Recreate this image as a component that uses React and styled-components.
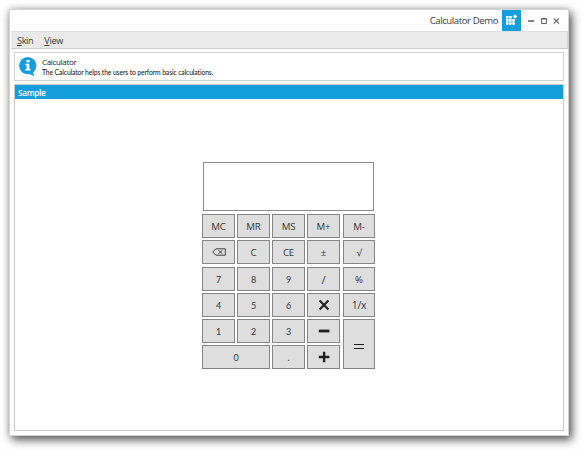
import React from "react";
import styled, { createGlobalStyle } from "styled-components";

const Global = createGlobalStyle`
  * { box-sizing: border-box; }
  body { margin: 0; background: #fff; overflow: hidden; font-family: "Open Sans", sans-serif; color: #3c3c3c; }
`;
const Page = styled.div`
  height: 450px;
  padding: 9px 14px 14px 9px;
`;
const Window = styled.main`
  width: 560px;
  height: 427px;
  display: flex;
  flex-direction: column;
  background: #fff;
  border: 1px solid #d4d4d4;
  box-shadow: 3px 4px 9px rgba(0, 0, 0, 0.62), 0 0 7px rgba(0, 0, 0, 0.22);
`;
const TitleBar = styled.header`
  height: 21px;
  display: flex;
  justify-content: flex-end;
  align-items: center;
  padding-right: 7px;
`;
const Title = styled.span`
  font-size: 9.6px;
  line-height: 21px;
  letter-spacing: -0.42px;
  margin-right: 4px;
  white-space: nowrap;
`;
const AppIcon = styled.svg`
  display: block;
  background: #149fdc;
`;
const WindowControls = styled.svg`
  display: block;
  margin-left: 7px;
`;
const MenuBar = styled.nav`
  height: 18px;
  margin: 0 0 0 1px;
  display: flex;
  gap: 11px;
  padding-left: 6px;
  background: #eaeaea;
  border-top: 1px solid #dedede;
  border-bottom: 1px solid #cbcbcb;
  border-right: 1px solid #d4d4d4;
`;
const MenuItem = styled.div`
  font-size: 9.2px;
  line-height: 17px;
  letter-spacing: -0.38px;
  &::first-letter { text-decoration: underline; }
`;
const Info = styled.section`
  height: 29px;
  margin: 3px 4px 0;
  border: 1px solid #d2d2d2;
  display: flex;
  padding-left: 4px;
`;
const InfoText = styled.div`
  display: flex;
  flex-direction: column;
  margin-left: 5px;
`;
const Heading = styled.span`
  font-size: 8px;
  line-height: 11px;
  margin-top: 3px;
  letter-spacing: -0.33px;
  color: #222;
`;
const Description = styled.span`
  font: 6.8px/10px Lato, sans-serif;
  letter-spacing: -0.12px;
  color: #111;
  white-space: nowrap;
`;
const Panel = styled.section`
  flex: 1;
  margin: 3px 4px 4px;
  border: 1px solid #cacaca;
  display: flex;
  flex-direction: column;
`;
const PanelTitle = styled.div`
  height: 14px;
  padding-left: 3px;
  color: #fff;
  background: #149fdc;
  font-size: 8.3px;
  font-weight: 600;
  letter-spacing: -0.35px;
  line-height: 15px;
`;
const Calculator = styled.div`
  width: 173px;
  margin: 63px 0 0 187px;
`;
const Display = styled.div`
  height: 49px;
  margin: 0 1px 3px;
  border: 1px solid #8c8c8c;
`;
const Keys = styled.div`
  display: grid;
  grid-template-columns: 35px 35px 35px 36px 32px;
  grid-template-rows: 26px 27px 26px 26px 26px 24px;
`;
const Key = styled.button`
  appearance: none;
  width: ${(p) => (p.$wide ? 68 : p.$last ? 32 : 33)}px;
  height: ${(p) => (p.$tall ? 50 : 24)}px;
  grid-column: span ${(p) => (p.$wide ? 2 : 1)};
  grid-row: span ${(p) => (p.$tall ? 2 : 1)};
  display: flex;
  align-items: center;
  justify-content: center;
  padding: ${(p) => (p.$tall ? 3 : p.$small ? 1 : 0)}px 0 0;
  border: 1px solid #858585;
  border-radius: 0;
  background: #dedede;
  color: #383838;
  font: ${(p) => (p.$small ? "9px Lato" : (p.$size || 9.7) + 'px "Open Sans"')}, sans-serif;
  letter-spacing: -0.2px;
`;

const Glyph = ({ d, w = 2, size = 12 }) => (
  <svg width={size} height={size} viewBox="0 0 12 12">
    <path d={d} fill="none" stroke="#202020" strokeWidth={w} />
  </svg>
);
const Erase = (
  <svg width="14" height="8" viewBox="0 0 14 8" fill="none" stroke="#333" strokeWidth="0.9">
    <path d="M.7 4 4 .8h9.3v6.4H4ZM6.4 2.2l4 3.6M10.4 2.2l-4 3.6" />
  </svg>
);
const keys = [
  ["MC"], ["MR"], ["MS"], ["M+"], ["M-", { $last: true }],
  [Erase, { "aria-label": "Backspace" }], ["C"], ["CE"], ["±"], ["√", { $last: true }],
  ["7", { $small: true }], ["8", { $small: true }], ["9", { $small: true }], ["/", { $size: 11.5 }], ["%", { $last: true }],
  ["4", { $small: true }], ["5", { $small: true }], ["6", { $small: true }],
  [<Glyph d="m1.6 1.6 8.8 8.8m0-8.8-8.8 8.8" w={2.1} />, { "aria-label": "Multiply" }],
  ["1/x", { $last: true, $size: 10.4 }],
  ["1", { $small: true }], ["2", { $small: true }], ["3", { $small: true }],
  [<Glyph d="M.8 6h10.6" w={2.8} />, { "aria-label": "Subtract" }],
  [<Glyph d="M1 4.5h10M1 8.5h10" w={1.1} />, { $tall: true, $last: true, "aria-label": "Equals" }],
  ["0", { $wide: true, $small: true }], [".", { $small: true }],
  [<Glyph d="M.8 6h10.6M6.1.7v10.6" w={2.4} />, { "aria-label": "Add" }],
];

export default function App() {
  return (
    <Page>
      <Global />
      <Window>
        <TitleBar>
          <Title>Calculator Demo</Title>
          <AppIcon width="19" height="21" viewBox="0 0 19 21">
            <path fill="#fff" d="M4 6h2.6v2.6H4zm3.1 0h2.6v2.6H7.1zM4 9.1h2.6v2.6H4zm3.1 0h2.6v2.6H7.1zm3.1 0h2.6v2.6h-2.6zM4 12.2h2.6v2.6H4zm3.1 0h2.6v2.6H7.1zm3.1 0h2.6v2.6h-2.6zM12.2 4.4h1.4v1.4H15v1.4h-1.4v1.4h-1.4V7.2h-1.4V5.8h1.4z" />
          </AppIcon>
          <WindowControls width="33" height="20" viewBox="0 0 33 20" fill="none" stroke="#666">
            <path d="M0 10h6" strokeWidth="1.6" />
            <path d="M13.5 7.5h5v5h-5zM13 8h6" strokeWidth="1" />
            <path d="m25.7 7.5 5.2 5.2m0-5.2-5.2 5.2" strokeWidth="1.1" />
          </WindowControls>
        </TitleBar>
        <MenuBar>
          <MenuItem>Skin</MenuItem>
          <MenuItem>View</MenuItem>
        </MenuBar>
        <Info>
          <svg width="18" height="27" viewBox="0 0 18 27">
            <circle cx="8.8" cy="12.6" r="8.7" fill="#149fdc" />
            <path d="m9 20.5 6.4 2.7-1.7-5z" fill="#149fdc" />
            <path d="M7.5 7h3v2.2h-3zM6.5 10.7h3.9v5.4h1.2v1.5H6.3v-1.5h1.3v-3.9H6.5z" fill="#fff" />
          </svg>
          <InfoText>
            <Heading>Calculator</Heading>
            <Description>The Calculator helps the users to perform basic calculations.</Description>
          </InfoText>
        </Info>
        <Panel>
          <PanelTitle>Sample</PanelTitle>
          <Calculator>
            <Display />
            <Keys>
              {keys.map(([label, props], i) => (
                <Key key={i} {...props}>{label}</Key>
              ))}
            </Keys>
          </Calculator>
        </Panel>
      </Window>
    </Page>
  );
}
